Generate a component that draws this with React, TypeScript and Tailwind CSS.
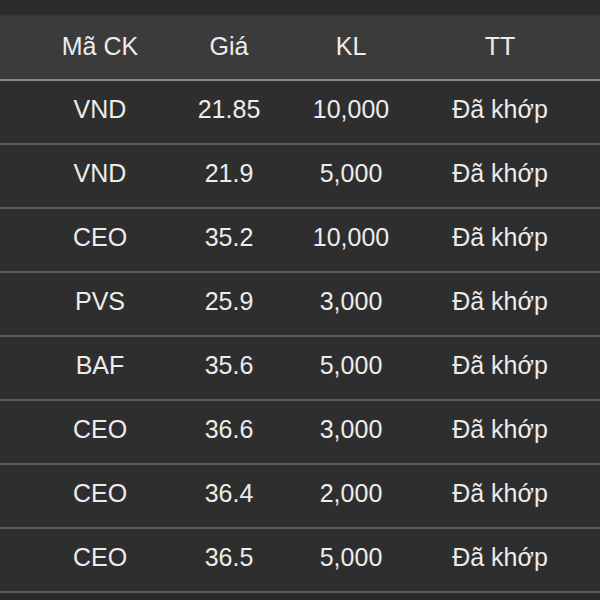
const rows = [
  ['VND', '21.85', '10,000', 'Đã khớp'],
  ['VND', '21.9', '5,000', 'Đã khớp'],
  ['CEO', '35.2', '10,000', 'Đã khớp'],
  ['PVS', '25.9', '3,000', 'Đã khớp'],
  ['BAF', '35.6', '5,000', 'Đã khớp'],
  ['CEO', '36.6', '3,000', 'Đã khớp'],
  ['CEO', '36.4', '2,000', 'Đã khớp'],
  ['CEO', '36.5', '5,000', 'Đã khớp'],
]

const cols = 'grid grid-cols-[120px_138px_106px_1fr] pl-[40px] pr-[4px]'

export default function App() {
  return (
    <div className="w-[600px] h-[600px] overflow-hidden bg-[#2a2a2a] text-[#ececec] text-[25px] font-['Liberation_Sans',Arial,sans-serif]">
      <div className="h-[16px] bg-[#2b2b2b] border-b border-[#353535]" />
      <div className={`${cols} h-[65px] items-center bg-[#3b3b3b] border-b-2 border-[#8a8a8a] pb-[2px]`}>
        <div className="text-center">Mã CK</div>
        <div className="text-center">Giá</div>
        <div className="text-center">KL</div>
        <div className="text-center">TT</div>
      </div>
      {rows.map((r, i) => (
        <div key={i} className={`${cols} h-[64px] items-center bg-[#2e2e2e] border-b-2 border-[#5c5c5c] pb-[4px]`}>
          {r.map((c, j) => <div key={j} className="text-center">{c}</div>)}
        </div>
      ))}
    </div>
  )
}
